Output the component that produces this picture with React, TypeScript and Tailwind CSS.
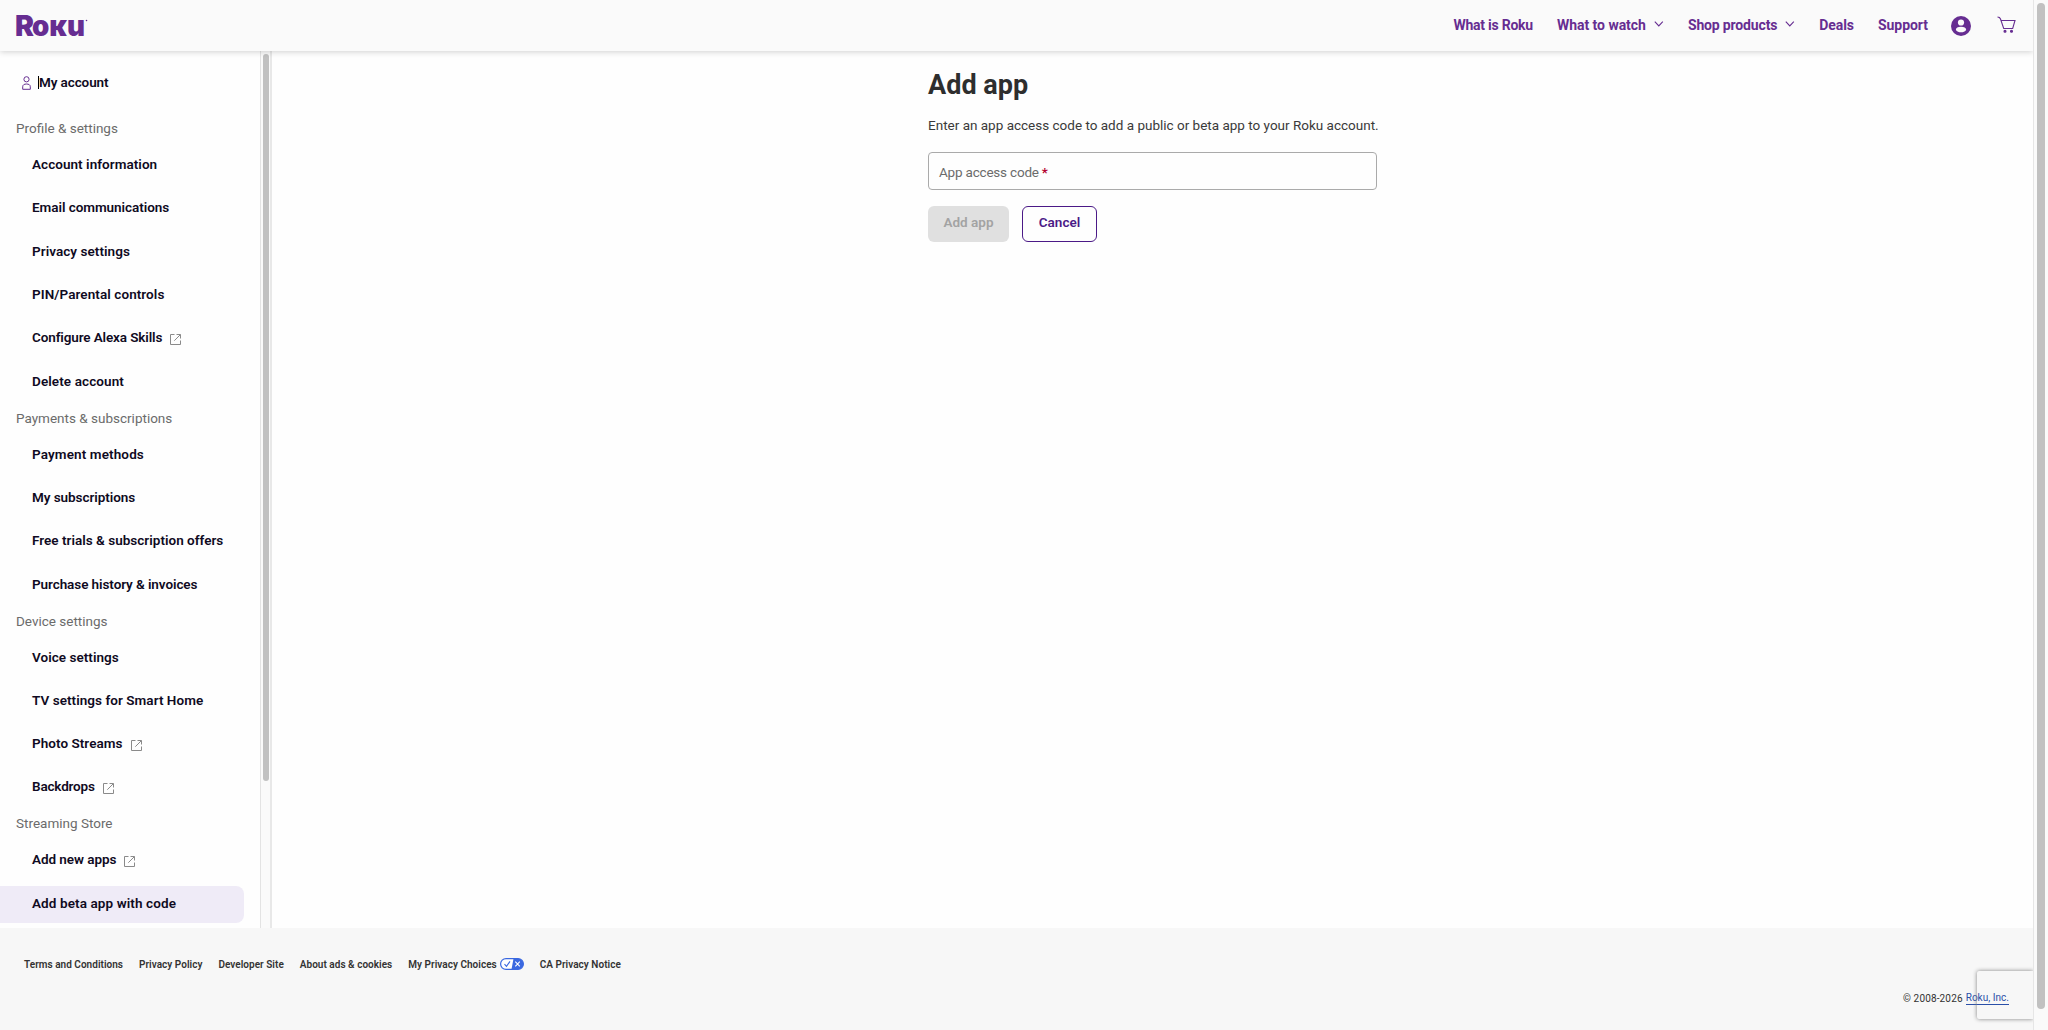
import clsx from "clsx";

type NavItem = { label: string; external?: boolean; active?: boolean; tracking?: string };
type NavGroup = { title: string; items: NavItem[] };

const groups: NavGroup[] = [
  {
    title: "Profile & settings",
    items: [
      { label: "Account information", tracking: "tracking-[0.05px]" },
      { label: "Email communications", tracking: "tracking-[-0.05px]" },
      { label: "Privacy settings", tracking: "tracking-[0.06px]" },
      { label: "PIN/Parental controls", tracking: "tracking-[0.08px]" },
      { label: "Configure Alexa Skills", external: true, tracking: "tracking-[-0.12px]" },
      { label: "Delete account", tracking: "tracking-[0.1px]" },
    ],
  },
  {
    title: "Payments & subscriptions",
    items: [
      { label: "Payment methods", tracking: "tracking-[0.12px]" },
      { label: "My subscriptions", tracking: "tracking-[-0.06px]" },
      { label: "Free trials & subscription offers", tracking: "tracking-[0.02px]" },
      { label: "Purchase history & invoices", tracking: "tracking-[-0.08px]" },
    ],
  },
  {
    title: "Device settings",
    items: [
      { label: "Voice settings", tracking: "tracking-[0.04px]" },
      { label: "TV settings for Smart Home", tracking: "tracking-[0.05px]" },
      { label: "Photo Streams", external: true, tracking: "tracking-[0.05px]" },
      { label: "Backdrops", external: true, tracking: "tracking-[-0.18px]" },
    ],
  },
  {
    title: "Streaming Store",
    items: [
      { label: "Add new apps", external: true, tracking: "tracking-[-0.05px]" },
      { label: "Add beta app with code", active: true, tracking: "tracking-[0.1px]" },
    ],
  },
];

function ExternalIcon() {
  return (
    <svg width="11" height="11" viewBox="0 0 11 11" fill="none" stroke="#8a8a8a" strokeWidth="1" className="mt-1 shrink-0">
      <path d="M4.500.5h-4v10h10v-4M6.500.5h4v4M10.300.7 4.300 6.700" />
    </svg>
  );
}

function Chevron() {
  return (
    <svg width="10" height="6" viewBox="0 0 10 6" fill="none" stroke="#662d91" strokeWidth="1.1" className="mb-1">
      <path d="m.8.7 4 4.200 4-4.200" />
    </svg>
  );
}

function Header() {
  return (
    <header className="relative z-10 flex h-[51px] shrink-0 items-center justify-between bg-[#fafafa] pl-2.5 pr-[17px] shadow-[0_1px_6px_rgba(0,0,0,0.18)]">
      <svg width="84" height="51" viewBox="0 0 84 51" fill="#662d91" fontFamily="Inter" fontWeight="900">
        <text x="5" y="35.500" fontSize="28" textLength="19" lengthAdjust="spacingAndGlyphs">R</text>
        <text x="22" y="35.500" fontSize="28" textLength="53" lengthAdjust="spacingAndGlyphs">oĸu</text>
        <circle cx="76.500" cy="20.500" r="0.8" />
      </svg>
      <nav className="flex items-center text-[14px] font-bold tracking-[-0.03px] text-[#662d91]">
        <a className="mr-6 tracking-[-0.25px]">What is Roku</a>
        <a className="mr-6 flex items-center gap-2">What to watch <Chevron /></a>
        <a className="mr-6 flex items-center gap-2 tracking-[-0.15px]">Shop products <Chevron /></a>
        <a className="mr-6 tracking-[-0.1px]">Deals</a>
        <a className="mr-[23px]">Support</a>
        <svg width="20" height="20" viewBox="0 0 20 20" className="mr-[26px] mt-px">
          <circle cx="10" cy="10" r="10" fill="#662d91" />
          <circle cx="10" cy="6.500" r="3.100" fill="#fafafa" />
          <path d="M4.800 14c0-2.200 2.200-3.200 5.200-3.200s5.200 1 5.200 3.200c-1.200 1.600-3 2.300-5.200 2.300S6 15.600 4.800 14Z" fill="#fafafa" />
        </svg>
        <svg width="19" height="18" viewBox="0 0 19 18" fill="none" stroke="#662d91" strokeWidth="1.1" className="-mt-0.5">
          <path d="M.5 1c2 0 2.500.5 3 2l3.200 9.500h9L18 4.500H4" />
          <circle cx="8" cy="15.300" r="1" fill="#662d91" />
          <circle cx="14.500" cy="15.300" r="1" fill="#662d91" />
        </svg>
      </nav>
    </header>
  );
}

function Sidebar() {
  return (
    <aside className="flex w-[272px] shrink-0 overflow-hidden border-r-2 border-[#e8e8e8]">
      <div className="w-[260px] pt-[13px] text-[13.5px]">
        <div className="flex h-[37px] items-center pl-[22px] font-semibold text-[#0f0a22]">
          <svg width="9" height="14" viewBox="0 0 9 14" fill="none" stroke="#662d91" strokeWidth="1" className="mr-[7px]">
            <circle cx="4.500" cy="3.300" r="2.600" />
            <path d="M.7 13.300v-2.500c0-2 1.600-2.800 3.800-2.800s3.800.8 3.800 2.800v2.500Z" />
          </svg>
          <span className="h-[13px] w-px bg-black" />
          <span className="tracking-[-0.1px]">My account</span>
        </div>
        <div className="h-2.5" />
        {groups.map((g) => (
          <section key={g.title}>
            <h2 className="flex h-9 items-center pb-0.5 pl-4 text-[#6b6b6b]">{g.title}</h2>
            <ul className="flex flex-col gap-[6.33px]">
              {g.items.map((it) => (
                <li
                  key={it.label}
                  className={clsx(
                    "flex h-[37px] w-[244px] items-center gap-2 rounded-r-lg pb-[3px] pl-8 font-semibold text-[#0f0a22]",
                    it.active && "bg-[#efebf7]"
                  )}
                >
                  <span className={clsx("whitespace-nowrap", it.tracking)}>{it.label}</span>
                  {it.external && <ExternalIcon />}
                </li>
              ))}
            </ul>
          </section>
        ))}
      </div>
      <div className="w-2.5 border-l border-[#e3e3e3] bg-[#fafafa] pl-0.5 pt-[3px]">
        <div className="h-[727px] w-1.5 rounded-full bg-[#c1c1c1]" />
      </div>
    </aside>
  );
}

function AddApp() {
  return (
    <main className="flex flex-1 justify-center bg-[#fefefe]">
      <div className="w-[449px] pt-[14px] text-[13.5px]">
        <h1 className="text-[27px] font-bold leading-10 tracking-[0.03px] text-[#2e2e2e]">Add app</h1>
        <p className="mb-[17px] mt-2.5 whitespace-nowrap leading-5 text-[#3a3a3a]">
          Enter an app access code to add a public or beta app to your Roku account.
        </p>
        <div className="flex h-[38px] items-center rounded border border-[#aaa] px-2.5 pt-[3px] text-[#6b6b6b]">
          <span className="tracking-[-0.2px]">App access code</span>
          <span className="ml-[3px] font-semibold text-[#b3002d]">*</span>
        </div>
        <div className="mt-4 flex gap-[13px] font-semibold">
          <button className="h-9 w-[81px] rounded-md bg-[#e0e0e0] pb-[3px] text-[#a3a3a3]">Add app</button>
          <button className="h-9 w-[75px] rounded-md border border-[#4b1a87] pb-[3px] text-[#4b1a87]">Cancel</button>
        </div>
      </div>
    </main>
  );
}

function Footer() {
  return (
    <footer className="relative h-[102px] shrink-0 bg-[#f7f7f7] pl-6 pr-6 pt-7 text-[10px] tracking-[0.03px] text-[#333]">
      <div className="flex h-4 items-center gap-4 font-semibold">
        <a>Terms and Conditions</a>
        <a>Privacy Policy</a>
        <a>Developer Site</a>
        <a>About ads &amp; cookies</a>
        <a className="flex items-center gap-[3px]">
          My Privacy Choices
          <svg width="24" height="12" viewBox="0 0 24 12" fill="none">
            <rect x=".6" y=".6" width="22.800" height="10.800" rx="5.400" fill="#fff" stroke="#3a68e0" strokeWidth="1.200" />
            <path d="M13.500.6H18a5.400 5.400 0 0 1 0 10.800h-6.500Z" fill="#3a68e0" />
            <path d="m4.500 6.200 2 2.200 3.500-5" stroke="#3a68e0" strokeWidth="1.100" />
            <path d="m15.300 3.700 4.500 4.600m0-4.600-4.500 4.600" stroke="#fff" strokeWidth="1.100" />
          </svg>
        </a>
        <a>CA Privacy Notice</a>
      </div>
      <div className="mt-[18px] flex h-4 items-center justify-end gap-[3px]">
        <span className="tracking-[0.15px]">© 2008-2026</span>
        <a className="border-b border-[#2a4fa8] leading-3 text-[#2a4fa8]">Roku, Inc.</a>
      </div>
      <div className="absolute right-0 top-[43px] h-[48px] w-14 rounded-l-xs shadow-[0_0_4px_#808080]" />
    </footer>
  );
}

export default function App() {
  return (
    <div className="flex h-[1030px] w-[2048px] overflow-hidden bg-[#fefefe] font-['Roboto',sans-serif]">
      <div className="flex w-[2033px] flex-col overflow-hidden">
        <Header />
        <div className="flex h-[877px] shrink-0">
          <Sidebar />
          <AddApp />
        </div>
        <Footer />
      </div>
      <div className="w-[15px] border-l border-[#e6e6e6] bg-[#fafafa] pl-[3px] pt-[3px]">
        <div className="h-[1006px] w-2 rounded-full bg-[#c1c1c1]" />
      </div>
    </div>
  );
}
